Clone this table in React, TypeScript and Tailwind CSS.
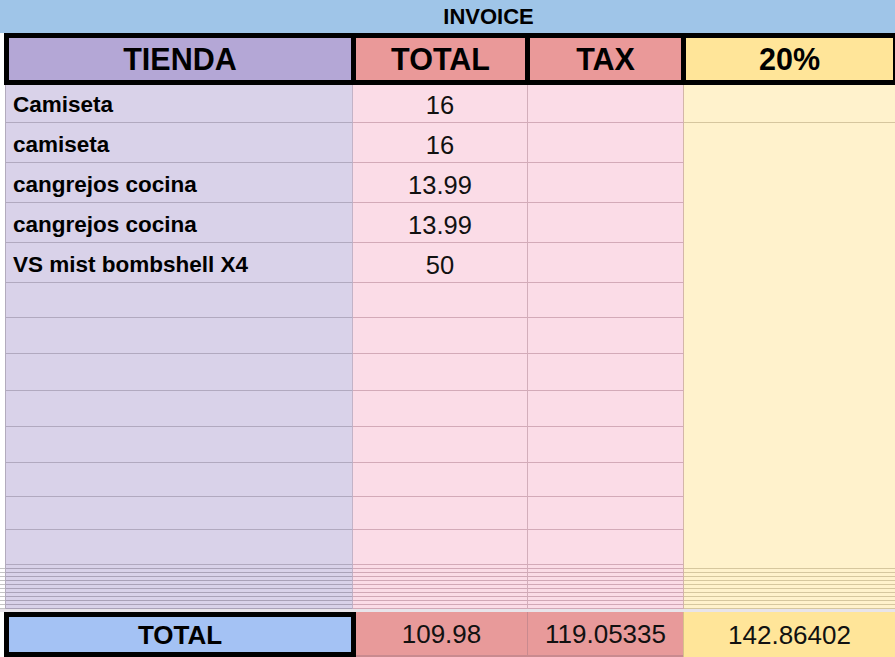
import React from "react";

const items = [
  { name: "Camiseta", total: "16" },
  { name: "camiseta", total: "16" },
  { name: "cangrejos cocina", total: "13.99" },
  { name: "cangrejos cocina", total: "13.99" },
  { name: "VS mist bombshell X4", total: "50" },
];

const rowHeights = [38, 40, 40, 40, 40, 35, 36, 37, 36, 36, 34, 33, 35];

export default function App() {
  const rows = rowHeights.map((h, i) => ({ h, item: items[i] }));
  const stripes = Array.from({ length: 11 });
  return (
    <div className="w-[895px] h-[657px] overflow-hidden bg-white font-['Liberation_Sans',Arial,sans-serif] text-black flex flex-col">
      {/* Title bar */}
      <div className="h-[33px] shrink-0 bg-[#9fc5e8] flex items-center justify-center pl-[82px]">
        <span className="text-[22px] font-bold leading-none">INVOICE</span>
      </div>

      {/* Header row */}
      <div className="h-[52px] shrink-0 flex">
        <div className="w-[4px] bg-white" />
        <div className="flex-1 flex border-[5px] border-r-2 border-black">
          <div className="w-[347px] bg-[#b4a7d6] border-r-[5px] border-black flex items-center justify-center">
            <span className="text-[30.5px] font-bold leading-none">TIENDA</span>
          </div>
          <div className="w-[174px] bg-[#ea9999] border-r-[5px] border-black flex items-center justify-center">
            <span className="text-[30.5px] font-bold leading-none">TOTAL</span>
          </div>
          <div className="w-[156px] bg-[#ea9999] border-r-[5px] border-black flex items-center justify-center">
            <span className="text-[30.5px] font-bold leading-none">TAX</span>
          </div>
          <div className="flex-1 bg-[#ffe599] flex items-center justify-center">
            <span className="text-[30.5px] font-bold leading-none">20%</span>
          </div>
        </div>
      </div>

      {/* Body */}
      <div className="flex shrink-0">
        <div className="w-[5px] bg-white" />
        <div className="w-[1px] bg-[#b3abbd]" />
        <div className="flex flex-col">
          {rows.map((r, i) => (
            <div key={i} className="flex" style={{ height: r.h }}>
              <div className="w-[347px] bg-[#d9d2e9] border-r border-r-[#c3b3c7] border-b border-b-[#b1a9bf] flex items-end pb-[6px] pl-[7px]">
                {r.item && (
                  <span className="text-[22.5px] font-bold leading-none">{r.item.name}</span>
                )}
              </div>
              <div className="w-[175px] bg-[#fbdce7] border-r border-r-[#d3aebb] border-b border-b-[#d3aab8] flex items-end pb-[4px] justify-center">
                {r.item && <span className="text-[25.5px] leading-none text-[#111]">{r.item.total}</span>}
              </div>
              <div className="w-[156px] bg-[#fbdce7] border-r border-r-[#d3b6a8] border-b border-b-[#d3aab8]" />
            </div>
          ))}
        </div>
        <div className="flex-1 flex flex-col">
          <div className="h-[38px] bg-[#fff2cc] border-b border-b-[#d6c69e]" />
          <div className="flex-1 bg-[#fff2cc]" />
        </div>
      </div>

      {/* Compressed hidden rows */}
      <div className="flex flex-col shrink-0">
        {stripes.map((_, i) => (
          <div key={i} className="h-[4px] flex">
            <div className="w-[5px] bg-white border-b border-b-[#c4c4c4]" />
            <div className="w-[1px] bg-[#b3abbd]" />
            <div className="w-[347px] bg-[#d9d2e9] border-r border-r-[#c3b3c7] border-b border-b-[#aaa2b8]" />
            <div className="w-[175px] bg-[#fbdce7] border-r border-r-[#d3aebb] border-b border-b-[#d1a8b6]" />
            <div className="w-[156px] bg-[#fbdce7] border-r border-r-[#d3b6a8] border-b border-b-[#d1a8b6]" />
            <div className="flex-1 bg-[#fff2cc] border-b border-b-[#d6c79e]" />
          </div>
        ))}
      </div>
      <div className="h-[3px] shrink-0 bg-[#e8e4ea]" />

      {/* Total row */}
      <div className="h-[45px] shrink-0 flex">
        <div className="w-[4px] bg-white" />
        <div className="w-[352px] bg-[#a4c2f4] border-[5px] border-black flex items-center justify-center">
          <span className="text-[26px] font-bold leading-none">TOTAL</span>
        </div>
        <div className="w-[172px] bg-[#e89a9a] border-r border-r-[#c98a8f] border-b-2 border-b-[#c98a8f] flex items-center justify-center">
          <span className="text-[26px] leading-none text-[#111]">109.98</span>
        </div>
        <div className="w-[155px] bg-[#e89a9a] border-b-2 border-b-[#c98a8f] flex items-center justify-center">
          <span className="text-[26px] leading-none text-[#111]">119.05335</span>
        </div>
        <div className="flex-1 bg-[#ffe599] border-l border-l-[#d6c08a] flex items-center justify-center">
          <span className="text-[26px] leading-none text-[#111]">142.86402</span>
        </div>
      </div>
    </div>
  );
}
